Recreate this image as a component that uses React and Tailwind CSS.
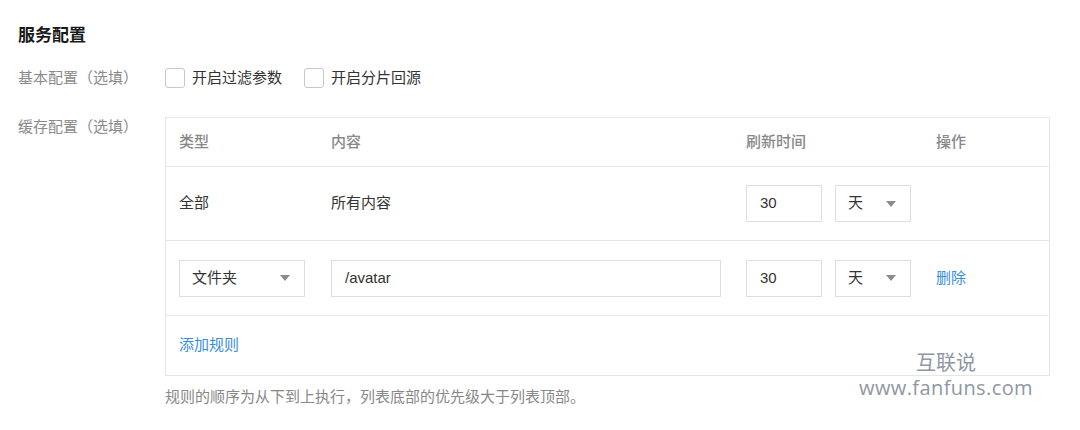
import React from "react";

const Arrow = () => (
  <svg width="10" height="6" viewBox="0 0 10 6" className="shrink-0">
    <path d="M0 0 L10 0 L5 6 Z" fill="#8c8c8c" />
  </svg>
);

const Select = ({ value, width }) => (
  <div
    className={`h-[37px] ${width} border border-[#dedede] flex items-center justify-between pl-[12px] pr-[14px] text-[15px] text-[#333]`}
  >
    <span>{value}</span>
    <Arrow />
  </div>
);

const Input = ({ value, width }) => (
  <div
    className={`h-[37px] ${width} border border-[#dedede] flex items-center px-[13px] text-[15px] text-[#333]`}
  >
    {value}
  </div>
);

const Checkbox = ({ label }) => (
  <label className="flex items-center gap-[7px] text-[15px] text-[#333]">
    <span className="w-[20px] h-[20px] rounded-[3px] border border-[#c8c8c8] bg-white" />
    {label}
  </label>
);

const App = () => {
  const cols = "grid grid-cols-[152px_415px_190px_1fr] pl-[13px] items-center";

  return (
    <div className="relative w-[1080px] h-[430px] bg-white font-['Liberation_Sans','Noto_Sans_CJK_SC',sans-serif] pl-[18px] pt-[24px]">
      <h2 className="text-[17px] leading-[24px] font-bold text-[#1a1a1a]">服务配置</h2>

      {/* 基本配置 */}
      <div className="flex items-center mt-[20px] h-[20px]">
        <div className="w-[147px] text-[15px] text-[#8a8a8a]">基本配置（选填）</div>
        <div className="flex items-center gap-[22px]">
          <Checkbox label="开启过滤参数" />
          <Checkbox label="开启分片回源" />
        </div>
      </div>

      {/* 缓存配置 */}
      <div className="flex mt-[29px]">
        <div className="w-[147px] text-[15px] leading-[20px] text-[#8a8a8a]">缓存配置（选填）</div>
        <div>
          <div className="w-[885px] border border-[#e6e6e6]">
            <div className={`${cols} h-[49px] border-b border-[#e6e6e6] text-[15px] font-medium text-[#888]`}>
              <div>类型</div>
              <div>内容</div>
              <div>刷新时间</div>
              <div>操作</div>
            </div>

            <div className={`${cols} h-[74px] border-b border-[#e6e6e6] text-[15px] text-[#333]`}>
              <div>全部</div>
              <div>所有内容</div>
              <div className="flex gap-[13px]">
                <Input value="30" width="w-[76px]" />
                <Select value="天" width="w-[76px]" />
              </div>
              <div />
            </div>

            <div className={`${cols} h-[75px] border-b border-[#e6e6e6] text-[15px] text-[#333]`}>
              <div>
                <Select value="文件夹" width="w-[126px]" />
              </div>
              <div>
                <Input value="/avatar" width="w-[390px]" />
              </div>
              <div className="flex gap-[13px]">
                <Input value="30" width="w-[76px]" />
                <Select value="天" width="w-[76px]" />
              </div>
              <div className="text-[#3a8ee0]">删除</div>
            </div>

            <div className="h-[59px] flex items-center pl-[13px] text-[15px] text-[#3a8ee0]">添加规则</div>
          </div>
          <p className="mt-[11px] text-[15px] leading-[20px] text-[#888]">
            规则的顺序为从下到上执行，列表底部的优先级大于列表顶部。
          </p>
        </div>
      </div>

      {/* watermark */}
      <div className="absolute left-[856px] top-[349px] w-[180px] flex flex-col items-center text-[#8f97a2] leading-[26px]">
        <span className="text-[20px] font-['Noto_Sans_CJK_SC',sans-serif]">互联说</span>
        <span className="text-[20px] font-['Open_Sans',sans-serif] tracking-[0.4px]">www.fanfuns.com</span>
      </div>
    </div>
  );
};

export default App;
